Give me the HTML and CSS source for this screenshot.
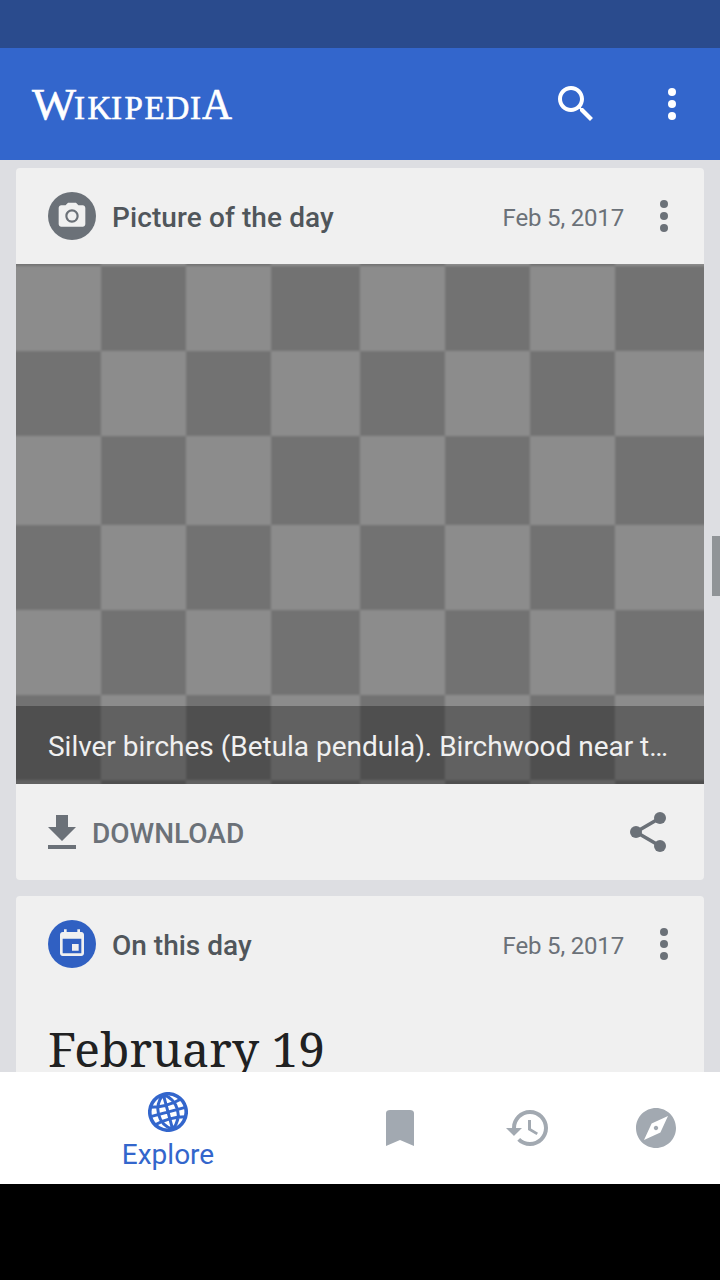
FILE: index.html
```html
<!DOCTYPE html>
<html lang="en">
<head>
<meta charset="utf-8">
<title>Wikipedia</title>
<link rel="stylesheet" href="styles.css">
</head>
<body>
<div class="status"></div>
<header class="toolbar">
  <svg class="logo" width="210" height="64" viewBox="0 0 210 64" role="img" aria-label="Wikipedia">
    <text y="46.500"><tspan class="big" x="0" textLength="44" lengthAdjust="spacingAndGlyphs">W</tspan><tspan x="42">I</tspan><tspan x="55.500">K</tspan><tspan x="79">I</tspan><tspan x="92.500">P</tspan><tspan x="112.500">E</tspan><tspan x="133.500">D</tspan><tspan x="158">I</tspan><tspan class="big" x="170" textLength="30" lengthAdjust="spacingAndGlyphs">A</tspan></text>
  </svg>
  <svg class="icon search" viewBox="0 0 24 24"><path d="M15.5 14h-.79l-.28-.27C15.41 12.59 16 11.11 16 9.5 16 5.91 13.09 3 9.5 3S3 5.91 3 9.5 5.91 16 9.5 16c1.61 0 3.09-.59 4.23-1.57l.27.28v.79l5 4.99L20.49 19l-4.99-5zm-6 0C7.01 14 5 11.99 5 9.5S7.01 5 9.5 5 14 7.01 14 9.5 11.99 14 9.5 14z"/></svg>
  <svg class="icon" viewBox="0 0 24 24"><circle cx="12" cy="6" r="2"/><circle cx="12" cy="12" r="2"/><circle cx="12" cy="18" r="2"/></svg>
</header>
<main class="feed">
  <article class="card">
    <div class="card-head">
      <span class="badge"><svg viewBox="0 0 24 24"><path d="M9 2 7.170 4H4c-1.100 0-2 .9-2 2v12c0 1.100.9 2 2 2h16c1.100 0 2-.9 2-2V6c0-1.100-.9-2-2-2h-3.170L15 2H9zm3 15c-2.760 0-5-2.240-5-5s2.240-5 5-5 5 2.240 5 5-2.240 5-5 5z"/><circle cx="12" cy="12" r="3.400"/></svg></span>
      <h2 class="wide">Picture of the day</h2>
      <time>Feb 5, 2017</time>
      <svg class="icon" viewBox="0 0 24 24"><circle cx="12" cy="6" r="2"/><circle cx="12" cy="12" r="2"/><circle cx="12" cy="18" r="2"/></svg>
    </div>
    <div class="photo">
      <svg width="688" height="520" viewBox="0 0 688 520">
        <defs>
          <pattern id="checks" x="-10" y="2" width="708" height="344" patternUnits="userSpaceOnUse">
            <rect class="light" width="708" height="344"/>
            <path class="dark" d="M95 0h85v85H95zM265 0h89v85h-89zM439 0h85v85h-85zM609 0h99v85h-99zM0 85h95v85H0zM180 85h85v85h-85zM354 85h85v85h-85zM524 85h85v85h-85zM95 170h85v89H95zM265 170h89v89h-89zM439 170h85v89h-85zM609 170h99v89h-99zM0 259h95v85H0zM180 259h85v85h-85zM354 259h85v85h-85zM524 259h85v85h-85z"/>
          </pattern>
          <filter id="soften" x="0" y="0" width="1" height="1"><feGaussianBlur stdDeviation="1.100"/></filter>
        </defs>
        <rect x="-10" y="-10" width="708" height="540" fill="url(#checks)" filter="url(#soften)"/>
      </svg>
      <p class="caption">Silver birches (Betula pendula). Birchwood near t…</p>
    </div>
    <div class="actions">
      <svg class="download" width="28" height="34" viewBox="5 3 14 17"><path d="M19 9h-4V3H9v6H5l7 7 7-7zM5 18v2h14v-2H5z"/></svg>
      <span>DOWNLOAD</span>
      <svg class="share" width="48" height="48" viewBox="0 0 24 24"><path class="links" d="M18 5 6 12l12 7"/><circle cx="18" cy="5" r="3"/><circle cx="6" cy="12" r="3"/><circle cx="18" cy="19" r="3"/></svg>
    </div>
  </article>
  <article class="card">
    <div class="card-head">
      <span class="badge blue"><svg viewBox="0 0 24 24"><path d="M17 12h-5v5h5v-5zM16 1v2H8V1H6v2H5c-1.110 0-1.990.9-1.990 2L3 19c0 1.100.89 2 2 2h14c1.100 0 2-.9 2-2V5c0-1.100-.9-2-2-2h-1V1h-2zm3 18H5V8h14v11z"/></svg></span>
      <h2>On this day</h2>
      <time>Feb 5, 2017</time>
      <svg class="icon" viewBox="0 0 24 24"><circle cx="12" cy="6" r="2"/><circle cx="12" cy="12" r="2"/><circle cx="12" cy="18" r="2"/></svg>
    </div>
    <svg class="day" width="300" height="70" viewBox="0 0 300 70"><text x="0" y="43" textLength="277" lengthAdjust="spacingAndGlyphs">February 19</text></svg>
  </article>
  <i class="scroll"></i>
</main>
<nav class="tabs">
  <div class="tab active">
    <svg width="40" height="40" viewBox="-20 -20 40 40"><g class="globe" transform="rotate(-15)"><circle r="18.200"/><path d="M0-18V18M-18 0H18M-15.500-9Q0-5 15.500-9M-15.500 9Q0 5 15.500 9M0-18C-13-9-13 9 0 18M0-18C13-9 13 9 0 18"/></g></svg>
    <span>Explore</span>
  </div>
  <svg class="icon bookmark" viewBox="0 0 24 24"><path d="M17 3H7c-1.100 0-2 .45-2 1.500V21l7-3 7 3V4.500C19 3.450 18.100 3 17 3z"/></svg>
  <svg class="icon history" viewBox="0 0 24 24"><path d="M13 3c-4.970 0-9 4.030-9 9H1l3.890 3.890.07.14L9 12H6c0-3.870 3.130-7 7-7s7 3.130 7 7-3.130 7-7 7c-1.930 0-3.680-.79-4.940-2.060l-1.420 1.420C8.270 19.990 10.510 21 13 21c4.970 0 9-4.030 9-9s-4.030-9-9-9zm-1 5v5l4.280 2.540.72-1.210-3.500-2.080V8H12z"/></svg>
  <svg class="icon compass" viewBox="0 0 24 24"><path d="M12 10.900c-.61 0-1.100.49-1.100 1.100s.49 1.100 1.100 1.100 1.100-.49 1.100-1.100-.49-1.100-1.100-1.100zM12 2C6.480 2 2 6.480 2 12s4.480 10 10 10 10-4.480 10-10S17.520 2 12 2zm2.190 12.190L6 18l3.810-8.190L18 6l-3.810 8.190z"/></svg>
</nav>
</body>
</html>
```

FILE: styles.css
```css
* { box-sizing: border-box; }

body {
  margin: 0;
  width: 720px;
  height: 1280px;
  overflow: hidden;
  display: flex;
  flex-direction: column;
  background: #000;
  font-family: Roboto, sans-serif;
}

svg { display: block; flex: none; fill: currentColor; }
h2, p { margin: 0; }
.icon { width: 48px; height: 48px; }

.status { height: 48px; background: #2a4b8d; }

.toolbar {
  height: 112px;
  padding: 0 24px 0 32px;
  display: flex;
  align-items: center;
  background: #3366cc;
  color: #fff;
}
.logo { font: 33px "Liberation Serif", serif; stroke: #fff; stroke-width: .6; overflow: visible; }
.logo .big { font-size: 45px; }
.search { margin-left: auto; margin-right: 48px; }

.feed {
  position: relative;
  height: 912px;
  padding: 8px 16px 0;
  overflow: hidden;
  display: flex;
  flex-direction: column;
  gap: 16px;
  background: #dddee2;
}
.card {
  flex: none;
  overflow: hidden;
  border-radius: 4px;
  background: #f0f0f0;
  color: #6b7178;
}
.card-head {
  height: 96px;
  padding: 0 16px 0 32px;
  display: flex;
  align-items: center;
}
.badge {
  width: 48px;
  height: 48px;
  margin-right: 16px;
  border-radius: 50%;
  display: grid;
  place-items: center;
  background: #6b7178;
  color: #f0f0f0;
}
.badge.blue { background: #3060c2; }
.badge svg { width: 32px; height: 32px; }
h2 { font-size: 28px; font-weight: 500; line-height: 36px; color: #50565b; padding-top: 4px; }
h2.wide { letter-spacing: .1px; }
time { margin-left: auto; margin-right: 16px; padding-top: 3px; font-size: 24px; line-height: 30px; letter-spacing: -.17px; }

.photo { display: grid; height: 520px; }
.photo > * { grid-area: 1 / 1; }
.light { fill: #8c8c8c; }
.dark { fill: #727272; }
.caption {
  z-index: 1;
  align-self: end;
  height: 78px;
  padding: 0 32px;
  background: rgba(0, 0, 0, .3);
  color: #f0f0f0;
  font-size: 28px;
  line-height: 81px;
  letter-spacing: -.02px;
  white-space: nowrap;
}

.actions {
  height: 96px;
  padding: 0 32px;
  display: flex;
  align-items: center;
  gap: 16px;
  font-size: 28px;
  font-weight: 500;
}
.actions span { padding-top: 2px; }
.share { margin-left: auto; }
.links { fill: none; stroke: currentColor; stroke-width: 1.8; }

.day {
  margin: 32px 0 0 32px;
  color: #202122;
  font: 48px "Noto Serif", "DejaVu Serif Condensed", "DejaVu Serif", serif;
}

.scroll {
  position: absolute;
  right: 0;
  top: 376px;
  width: 8px;
  height: 60px;
  background: #909497;
}

.tabs {
  height: 112px;
  display: grid;
  grid-template-columns: 336px 128px 128px 128px;
  place-items: center;
  background: #fff;
  color: #a2a9b1;
}
.tab { display: flex; flex-direction: column; align-items: center; padding-top: 8px; }
.active { color: #3366cc; font-size: 28px; line-height: 36px; }
.active span { padding-top: 5px; }
.globe { fill: none; stroke: currentColor; stroke-width: 3; }
.globe circle { stroke-width: 3.6; }
```
